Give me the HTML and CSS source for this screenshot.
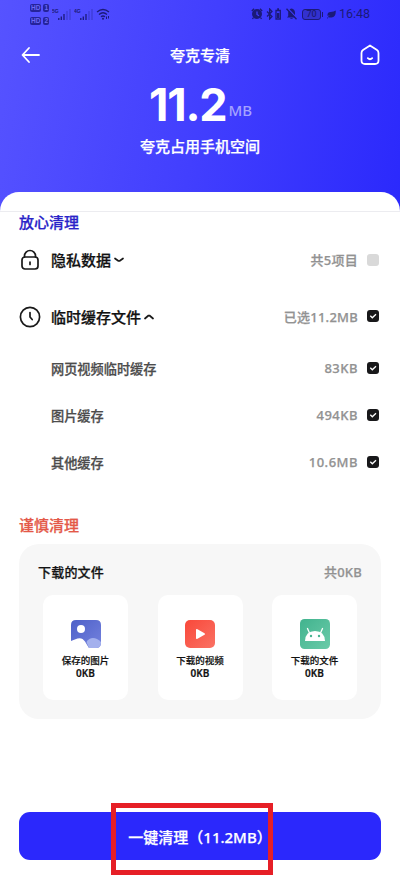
FILE: index.html
```html
<!DOCTYPE html>
<html lang="zh-CN">
<head>
<meta charset="utf-8">
<title>夸克专清</title>
<link rel="stylesheet" href="styles.css">
</head>
<body>
<div class="screen">
  <header class="hero">
    <div class="status">
      <div class="hd-stack">
        <div class="hd"><b>HD</b><b>1</b></div>
        <div class="hd"><b>HD</b><b>2</b></div>
      </div>
      <svg class="signal" width="19" height="14" viewBox="0 0 19 14"><text x="0" y="5.5">5G</text><path d="M6.8 13v-2M9.3 13v-3.500M12 13V7" /><path class="dim" d="M15 13V4M18 13V2"/></svg>
      <svg class="signal" width="19" height="14" viewBox="0 0 19 14"><text x="0" y="5.500">4G</text><path d="M6.800 13v-2M9.300 13v-3.500M12 13V7" /><path class="dim" d="M15 13V4M18 13V2"/></svg>
      <svg class="wifi" width="15" height="12" viewBox="0 0 15 12"><path d="M1 4Q7 -1 13 4M3 6.500q4-3.500 8 0M5 8.800q2-1.600 4 0"/><circle class="fill" cx="7" cy="10.800" r="1"/><path class="thin" d="M10.500 8.500v2.500M12.500 8v2.500"/></svg>
      <span class="grow"></span>
      <svg width="12" height="12" viewBox="0 0 12 12"><circle class="fill" cx="6" cy="6" r="5"/><path d="M.8 3 3 .8M9 .8 11.200 3M2.500 9.500l-1 1.500M9.500 9.500l1 1.500"/><path class="cut" d="M6 3.500V6.500l2 1.200"/></svg>
      <svg class="bt" width="8" height="12" viewBox="0 0 8 12"><path d="m1 3.500 5 5L3.700 11V1L6 3.500l-5 5"/></svg>
      <svg class="cell" width="6" height="12" viewBox="0 0 6 12"><path d="M1 2.500h4.300V11H1zM2.200 1h1.800"/><path class="fill" d="M2 5h2.300v5H2z"/></svg>
      <svg class="bell" width="11" height="12" viewBox="0 0 11 12"><path class="fill" d="M5.500.5Q9 1 9 5v3l1 1.500H1L2.200 8V5q0-4 3.300-4.500M4 10.200h3Q5.500 12 4 10.200"/><path class="slash" d="m1.800.5 9 9.500"/><path d="m.5.8 10 10.500"/></svg>
      <span class="battery">70</span><i class="nub"></i>
      <svg class="leaf" width="9" height="9" viewBox="0 0 9 9"><path class="fill" d="M8.800.4Q9 7 4.500 7.500 2.500 7.800 1.500 7L.5 8.700 0 8.300Q1 6.500 3 5 1.500 5.500.7 6-.3 2.500 3.500 2 7 1.600 8.800.4"/></svg>
      <time>16:48</time>
    </div>
    <nav class="nav">
      <svg width="19" height="18" viewBox="0 0 19 18"><path d="M8 2 1.500 9 8 16M2 9h16"/></svg>
      <h1>夸克专清</h1>
      <svg width="20" height="22" viewBox="0 0 20 22"><path d="M10 1.500 17 6q1.500 1 1.500 3v7.500q0 3.500-3.500 3.500H5q-3.500 0-3.500-3.500V9q0-2 1.500-3zM7.800 14.200q2.200 2.200 4.400 0"/></svg>
    </nav>
    <div class="total"><strong>11.2</strong><em>MB</em></div>
    <p class="caption">夸克占用手机空间</p>
  </header>

  <main class="sheet">
    <div class="lip"></div>
    <h2 class="safe">放心清理</h2>
    <div class="row group">
      <svg class="icon" width="22" height="22" viewBox="0 0 22 22"><rect x="3" y="8" width="16" height="12" rx="3"/><path d="M5.500 8V7a5.500 5.500 0 0 1 11 0v1M11 13v2.500"/></svg>
      <span class="name">隐私数据</span>
      <svg class="caret" width="10" height="6" viewBox="0 0 10 6"><path d="M1 1.500 4.500 4h1L9 1.500"/></svg>
      <span class="size">共5项目</span><i class="box off"></i>
    </div>
    <div class="row group">
      <svg class="icon" width="22" height="22" viewBox="0 0 22 22"><circle cx="11" cy="11" r="9.600"/><path d="M11 6.500V11l2.200 2.500"/></svg>
      <span class="name">临时缓存文件</span>
      <svg class="caret" width="10" height="6" viewBox="0 0 10 6"><path d="M1 4.500 4.500 1.500h1L9 4.500"/></svg>
      <span class="size">已选11.2MB</span><i class="box"><svg width="12" height="12" viewBox="0 0 12 12"><path d="m3.300 5.800 2 2L9 4.200"/></svg></i>
    </div>
    <div class="row sub"><span class="name">网页视频临时缓存</span><span class="size">83KB</span><i class="box"><svg width="12" height="12" viewBox="0 0 12 12"><path d="m3.300 5.800 2 2L9 4.200"/></svg></i></div>
    <div class="row sub"><span class="name">图片缓存</span><span class="size">494KB</span><i class="box"><svg width="12" height="12" viewBox="0 0 12 12"><path d="m3.300 5.800 2 2L9 4.200"/></svg></i></div>
    <div class="row sub"><span class="name">其他缓存</span><span class="size">10.6MB</span><i class="box"><svg width="12" height="12" viewBox="0 0 12 12"><path d="m3.300 5.800 2 2L9 4.200"/></svg></i></div>

    <h2 class="careful">谨慎清理</h2>
    <section class="card">
      <div class="card-head"><h3>下载的文件</h3><span>共0KB</span></div>
      <div class="tiles">
        <div class="tile">
          <svg width="32" height="30" viewBox="0 0 32 30">
            <defs><linearGradient id="blue" x2="1" y2="1"><stop stop-color="#4d60c8"/><stop offset="1" stop-color="#7482de"/></linearGradient></defs>
            <path fill="url(#blue)" d="M1 22V6q0-5 5-5h20q5 0 5 5v18q0 5-5 5h-7q-2-3-4-6.500-3-4.500-7.500-3Q4 20.500 1 22"/>
            <path fill="#a3b0ed" d="M16.500 23q2.500-4 6.500-4t8 4v1q0 5-5 5h-7z"/><circle cx="11" cy="10" r="4" fill="#fff"/>
          </svg>
          <span>保存的图片</span><span class="kb">0KB</span>
        </div>
        <div class="tile">
          <svg width="32" height="30" viewBox="0 0 32 30">
            <defs><linearGradient id="red" x2="1" y2="1"><stop stop-color="#f9483a"/><stop offset="1" stop-color="#fa7264"/></linearGradient></defs>
            <rect x="1" y="1" width="30" height="28" rx="5" fill="url(#red)"/><path fill="#fff" d="M12 11q0-1.500 1.500-.7l7 4q1.200.7 0 1.400l-7 4Q12 20.500 12 19z"/>
          </svg>
          <span>下载的视频</span><span class="kb">0KB</span>
        </div>
        <div class="tile">
          <svg width="32" height="30" viewBox="0 0 32 30">
            <defs><linearGradient id="green" x2="1" y2="1"><stop stop-color="#41b38e"/><stop offset="1" stop-color="#6bcba9"/></linearGradient></defs>
            <rect x="1" y="0" width="30" height="30" rx="4.500" fill="url(#green)"/><path fill="#fff" d="M6 22Q6.500 12 16 12t10 10z"/><path d="m10.500 14-2-4.500M21.500 14l2-4.500" stroke="#fff" stroke-width="1.300" stroke-linecap="round"/><circle cx="12" cy="17" r="1.200" fill="#47b591"/><circle cx="20" cy="17" r="1.200" fill="#47b591"/>
          </svg>
          <span>下载的文件</span><span class="kb">0KB</span>
        </div>
      </div>
    </section>
    <div class="action"><button>一键清理（11.2MB）</button><i class="marker"></i></div>
  </main>
</div>
</body>
</html>
```
FILE: styles.css
```css
* { box-sizing: border-box; margin: 0; padding: 0; }
body { font-family: "Noto Sans", "Noto Sans CJK SC", sans-serif; background: #fff; }
svg { display: block; flex: none; fill: none; }
i, em { font-style: normal; }
.screen { width: 400px; height: 888px; overflow: hidden; background: #fff; }

.hero { height: 211px; color: #fff; background: linear-gradient(100deg, #5653ff 0%, #423ffe 50%, #2b29fc 100%); }
.status { height: 28px; padding: 0 28px 0 30px; display: flex; align-items: center; color: #1b1a78; }
.status svg { stroke: currentColor; stroke-width: 1.3; }
.status .fill { fill: currentColor; stroke: none; }
.status .thin { stroke-width: 1; }
.status .cut { stroke: #403dfc; }
.hd-stack { display: grid; gap: 5px; margin-right: 3px; }
.hd { display: flex; gap: 2px; }
.hd b { height: 8px; padding: 0 1px; border-radius: 2px; background: #25239b; color: #6c6af5; font: 700 6.500px/8px "Liberation Sans", sans-serif; }
.status .signal { margin-right: 3px; }
.signal text { fill: currentColor; stroke: none; font: 700 5px "Liberation Sans", sans-serif; }
.signal .dim { opacity: .3; }
.grow { flex: 1; }
.bt { margin-left: 3px; }
.cell { margin-left: 1px; }
.bell { margin-left: 5px; }
.status .bell .slash { stroke: #3d3afb; stroke-width: 1.3; }
.battery { width: 19px; height: 11px; margin-left: 5px; border: 1px solid; border-radius: 3px; background: #3331cf; font: 500 9px/9px Roboto, sans-serif; text-align: center; }
.nub { width: 1px; height: 5px; margin: 0 4px 0 1px; background: currentColor; }
.leaf { margin-right: 3px; }
.status time { width: 33px; font: 400 12.500px/16px Roboto, sans-serif; white-space: nowrap; }

.nav { height: 54px; padding: 0 20px 0 21px; display: flex; align-items: center; justify-content: space-between; }
.nav svg { stroke: #fff; stroke-width: 1.8; stroke-linecap: round; stroke-linejoin: round; }
h1, h2, .name, .caption, button { -webkit-text-stroke: .25px currentColor; }
.nav h1 { font-size: 15px; line-height: 20px; font-weight: 500; }
.total { height: 46px; padding-left: 1px; display: flex; justify-content: center; align-items: flex-start; line-height: 46px; }
.total strong { font-family: Inter, "Noto Sans", sans-serif; font-size: 45px; font-weight: 700; letter-spacing: -1.2px; }
.total em { margin: 18px 0 0 2px; font-size: 15px; line-height: 20px; font-weight: 500; color: #a5a3ff; }
.caption { height: 36px; text-align: center; font-size: 15px; line-height: 36px; font-weight: 500; }

.sheet { height: 696px; margin-top: -19px; padding: 0 19px; border-radius: 19px 19px 0 0; background: #fff; }
.lip { height: 20px; margin: 0 -19px; border-bottom: 1px solid #ececf0; }
h2 { height: 20px; font-size: 15px; line-height: 20px; font-weight: 500; }
.safe { color: #2923c8; }
.careful { margin-top: 29px; color: #e45848; }
.row { display: flex; align-items: center; color: #111; }
.group { height: 56.500px; font-weight: 500; font-size: 15px; line-height: 20px; }
.icon { margin-right: 10px; }
.icon, .caret { stroke: #191919; stroke-width: 1.7; stroke-linecap: round; stroke-linejoin: round; }
.caret { margin-left: 3px; }
.sub { height: 47px; padding-left: 32px; color: #4c4c4c; font-size: 13.200px; font-weight: 500; }
.size { margin-left: auto; color: #929292; font-size: 13px; line-height: 18px; font-weight: 500; letter-spacing: .25px; -webkit-text-stroke: .25px currentColor; }
.sub .size { margin-top: -1px; letter-spacing: .5px; }
.box { width: 12px; height: 12px; margin: -1px 2px 0 9px; border-radius: 3px; background: #18181a; }
.box svg { stroke: #fff; stroke-width: 1.3; }
.box.off { background: #d9d9d9; }

.card { height: 175px; margin-top: 9px; padding: 17px 24px 0; border-radius: 20px; background: #f7f7f7; }
.card-head { height: 22px; margin: 0 -5px; display: flex; justify-content: space-between; font-size: 13px; line-height: 22px; font-weight: 500; letter-spacing: .2px; color: #929292; -webkit-text-stroke: .25px currentColor; }
.card-head h3 { font: inherit; color: #141414; }
.tiles { margin-top: 12px; display: flex; justify-content: space-between; }
.tile { width: 85px; height: 105px; padding-top: 24px; border-radius: 10px; background: #fff; display: flex; flex-direction: column; align-items: center; font-size: 9.500px; line-height: 12px; font-weight: 500; color: #111; -webkit-text-stroke: .2px currentColor; }
.tile svg { margin-bottom: 6px; }
.kb { font-size: 10px; font-weight: 600; }

.action { position: relative; height: 48px; margin-top: 93px; }
button { display: block; width: 100%; height: 48px; padding: 2px 0 0; border: 0; border-radius: 11px; background: #2b28fc; color: #fff; font: 500 15px/46px "Noto Sans", "Noto Sans CJK SC", sans-serif; }
.marker { position: absolute; left: 92px; top: -9px; width: 162px; height: 72px; border: 5px solid #e61f26; }
```
